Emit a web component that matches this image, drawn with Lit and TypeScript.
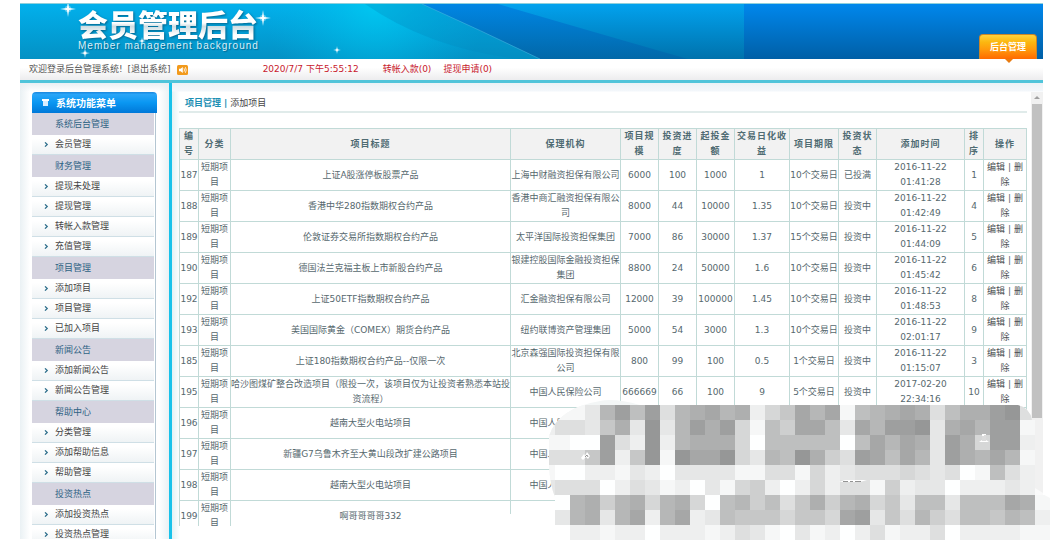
import { LitElement, html, css, svg } from "lit";
import { customElement } from "lit/decorators.js";

type MenuEntry = { label: string; heading?: boolean };

const MENU: MenuEntry[] = [
  { label: "系统后台管理", heading: true },
  { label: "会员管理" },
  { label: "财务管理", heading: true },
  { label: "提现未处理" },
  { label: "提现管理" },
  { label: "转帐入款管理" },
  { label: "充值管理" },
  { label: "项目管理", heading: true },
  { label: "添加项目" },
  { label: "项目管理" },
  { label: "已加入项目" },
  { label: "新闻公告", heading: true },
  { label: "添加新闻公告" },
  { label: "新闻公告管理" },
  { label: "帮助中心", heading: true },
  { label: "分类管理" },
  { label: "添加帮助信息" },
  { label: "帮助管理" },
  { label: "投资热点", heading: true },
  { label: "添加投资热点" },
  { label: "投资热点管理" },
];

const HEADS = ["编号", "分类", "项目标题", "保理机构", "项目规模", "投资进度", "起投金额", "交易日化收益", "项目期限", "投资状态", "添加时间", "排序", "操作"];

const ROWS: string[][] = [
  ["187", "上证A股涨停板股票产品", "上海中财融资担保有限公司", "6000", "100", "1000", "1", "10个交易日", "已投满", "2016-11-22 01:41:28", "1"],
  ["188", "香港中华280指数期权合约产品", "香港中商汇融资担保有限公司", "8000", "44", "10000", "1.35", "10个交易日", "投资中", "2016-11-22 01:42:49", "4"],
  ["189", "伦敦证券交易所指数期权合约产品", "太平洋国际投资担保集团", "7000", "86", "30000", "1.37", "15个交易日", "投资中", "2016-11-22 01:44:09", "5"],
  ["190", "德国法兰克福主板上市新股合约产品", "银建控股国际金融投资担保集团", "8800", "24", "50000", "1.6", "10个交易日", "投资中", "2016-11-22 01:45:42", "6"],
  ["192", "上证50ETF指数期权合约产品", "汇金融资担保有限公司", "12000", "39", "100000", "1.45", "10个交易日", "投资中", "2016-11-22 01:48:53", "8"],
  ["193", "美国国际黄金（COMEX）期货合约产品", "纽约联博资产管理集团", "5000", "54", "3000", "1.3", "10个交易日", "投资中", "2016-11-22 02:01:17", "9"],
  ["185", "上证180指数期权合约产品--仅限一次", "北京森强国际投资担保有限公司", "800", "99", "100", "0.5", "1个交易日", "投资中", "2016-11-22 01:15:07", "3"],
  ["195", "哈沙图煤矿整合改造项目（限投一次，该项目仅为让投资者熟悉本站投资流程）", "中国人民保险公司", "666669", "66", "100", "9", "5个交易日", "投资中", "2017-02-20 22:34:16", "10"],
  ["196", "越南大型火电站项目", "中国人民保险公司", "", "", "", "", "", "", "", ""],
  ["197", "新疆G7乌鲁木齐至大黄山段改扩建公路项目", "中国人民保险公司", "", "", "", "", "", "", "", ""],
  ["198", "越南大型火电站项目", "中国人民保险公司", "", "", "", "", "", "", "", ""],
  ["199", "啊哥哥哥哥332", "", "", "", "", "", "", "", "", ""],
];

/* One hex digit per 15px tile, 0 is white and F the darkest grey; a dot leaves the tile out. */
const TILES = [
  "11139C8C49AB9A257B9B189ABA48AACD4.",
  "24437A3D39CAC5186BB83B9CCD3AB9CC1.",
  "1100C42D29AAA508888808B9BA3CA5CC2.",
  "4447C27D1DBBD5398DA64CB8B93CA9B91.",
  "100221320333311441523444543401842.",
  "344402431203156202524416233022232.",
  ".09A69A59A50896847A69A573883888BA1",
  ".39A39B29B2387775775BC374964887982",
  "..22122022212431031202412240222211",
];

const grey = (digit: string) => {
  const n = 255 - parseInt(digit, 16) * 8;
  return `rgb(${n - 1},${n},${n})`;
};

const star = (x: number, y: number, r: number) => svg`
  <circle cx=${x} cy=${y} r=${r / 2.4} fill="#fff" opacity="0.35"></circle>
  <path fill="#fff" d="M${x} ${y - r}L${x + r / 8} ${y - r / 8}L${x + r} ${y}L${x + r / 8} ${y + r / 8}L${x} ${y + r}L${x - r / 8} ${y + r / 8}L${x - r} ${y}L${x - r / 8} ${y - r / 8}Z"></path>
  <circle cx=${x} cy=${y} r=${r / 5} fill="#fff"></circle>`;

@customElement("app-header")
class AppHeader extends LitElement {
  static styles = css`
    :host { display: block; position: relative; height: 56px; background: linear-gradient(#0087ec, #005fa6); border-top: 1px solid #8fd0dc; box-sizing: border-box; }
    .art { position: absolute; left: 0; top: 0; display: block; }
    .bar { position: relative; display: flex; justify-content: space-between; align-items: flex-start; height: 55px; padding: 0 6px 0 58px; }
    .logo { display: flex; flex-direction: column; padding-top: 2px; }
    .name { margin: 0; font: 900 30px/34px "Noto Sans CJK SC", sans-serif; background: linear-gradient(#fff 50%, #cfdde2 60%, #fff 85%); -webkit-background-clip: text; background-clip: text; color: transparent; filter: drop-shadow(1px 1px 1px #04648c); }
    .sub { margin: 0; font: 10px/12px "Liberation Sans", Arial, sans-serif; letter-spacing: 1px; color: #d8f0fa; text-shadow: 1px 1px 1px #04648c; }
    .tab { align-self: flex-end; position: relative; width: 58px; height: 25px; padding: 0; border: 1px solid #c8862a; border-bottom: 0; border-radius: 4px 4px 0 0; background: linear-gradient(#ffd23c, #fbb710 30%, #ff9a0c 60%, #ff6a00); color: #fff; font: bold 9px/24px "Noto Sans CJK SC", sans-serif; }
    .tab::after { content: ""; position: absolute; left: 25px; top: 24px; border: 4px solid transparent; border-top: 4px solid #e87b10; border-bottom: 0; }
  `;
  render() {
    return html`
      <svg class="art" width="724" height="55" viewBox="0 0 724 55" aria-hidden="true">
        <defs>
          <linearGradient id="a" x1="0" y1="0" x2="0" y2="1"><stop offset="0" stop-color="#02b0ec"></stop><stop offset="1" stop-color="#0391c4"></stop></linearGradient>
          <linearGradient id="b" x1="0" y1="0" x2="0" y2="1"><stop offset="0" stop-color="#0086e4"></stop><stop offset="1" stop-color="#0268a8"></stop></linearGradient>
          <linearGradient id="c" x1="0" y1="0" x2="0" y2="1"><stop offset="0" stop-color="#02a2ee"></stop><stop offset="1" stop-color="#0072ac"></stop></linearGradient>
          <radialGradient id="d" gradientUnits="userSpaceOnUse" cx="355" cy="0" r="110"><stop offset="0" stop-color="#00ccf2" stop-opacity="0.8"></stop><stop offset="1" stop-color="#00b4e4" stop-opacity="0"></stop></radialGradient>
        </defs>
        <rect width="724" height="55" fill="url(#a)"></rect>
        <rect width="724" height="55" fill="url(#d)"></rect>
        <path d="M345 0Q410 45 500 55H524Q465 26 404 0Z" fill="#0488bc" opacity="0.3"></path>
        <path d="M402 0Q460 26 520 55H724V0Z" fill="url(#b)"></path>
        <path d="M478 0Q560 24 668 55H724V0Z" fill="url(#c)"></path>
        <path d="M402 0Q460 26 520 55" fill="none" stroke="#48b8e0" stroke-width="0.8" opacity="0.7"></path>
      </svg>
      <div class="bar">
        <div class="logo">
          <h1 class="name">会员管理后台</h1>
          <p class="sub">Member management background</p>
        </div>
        <button class="tab" type="button">后台管理</button>
      </div>
      <svg class="art" width="340" height="55" viewBox="0 0 340 55" aria-hidden="true">
        ${star(48, 5, 8)}${star(243, 14, 8)}${star(317, 46, 4)}${star(65, 49, 5)}${star(122, 37, 4)}
      </svg>`;
  }
}

@customElement("app-menu")
class AppMenu extends LitElement {
  static styles = css`
    :host { display: block; }
    .title { display: flex; align-items: center; gap: 7px; height: 21px; margin: 0; padding-left: 10px; border-radius: 4px 4px 0 0; background: linear-gradient(#1b86dc, #2aa6f8 12%, #0a97f2 50%, #0078d8); color: #fff; font: bold 10px/20px "Noto Sans CJK SC", sans-serif; }
    .list { list-style: none; margin: 0; padding: 0; margin-right: 1px; border-right: 1px solid #b4c6d2; }
    .item { box-sizing: border-box; height: 20px; margin-right: 1px; border-bottom: 1px solid #cfdfe6; background: linear-gradient(#fff 20%, #eff3f5); }
    .head { box-sizing: border-box; height: 22px; margin-right: 1px; padding-left: 23px; background: #d6d4e0; color: #2f6384; line-height: 22px; }
    .link { display: flex; align-items: center; gap: 6px; padding-left: 10px; line-height: 19px; color: #444; text-decoration: none; }
  `;
  render() {
    return html`
      <h2 class="title">
        <svg width="7" height="7" viewBox="0 0 7 7" aria-hidden="true"><path d="M0 0H7V2H0Z" fill="#fff"></path><path d="M1 2H6V7H1Z" fill="#d8eeff"></path></svg>
        系统功能菜单
      </h2>
      <ul class="list">
        ${MENU.map((m) =>
          m.heading
            ? html`<li class="head">${m.label}</li>`
            : html`<li class="item"><a class="link" href="#"><svg width="7" height="5" viewBox="0 0 7 5" aria-hidden="true"><path d="M3 0.4L5.2 2.5L3 4.6" fill="none" stroke="#2f6f8c" stroke-width="1.3"></path></svg>${m.label}</a></li>`
        )}
      </ul>`;
  }
}

@customElement("project-table")
class ProjectTable extends LitElement {
  static styles = css`
    :host { display: block; }
    .grid { width: 100%; table-layout: fixed; border-collapse: collapse; color: #56686e; text-align: center; line-height: 15px; }
    .w1 { width: 19px; } .w2 { width: 32px; } .w4 { width: 110px; } .w5 { width: 38px; } .w6 { width: 55px; } .w7 { width: 49px; } .w8 { width: 88px; } .w9 { width: 43px; }
    .th { height: 30px; padding: 0; border: 1px solid #c1dad7; background: #f2f2f2; color: #4f6b72; font-weight: bold; letter-spacing: 1px; }
    .td { height: 30px; padding: 0; border: 1px solid #c1dad7; background: #fff; }
    .op { color: #4a4f52; text-decoration: none; }
  `;
  render() {
    return html`
      <table class="grid">
        <colgroup>
          <col class="w1"><col class="w2"><col><col class="w4"><col class="w5"><col class="w5"><col class="w5"><col class="w6"><col class="w7"><col class="w5"><col class="w8"><col class="w1"><col class="w9">
        </colgroup>
        <thead><tr>${HEADS.map((h) => html`<th class="th" scope="col">${h}</th>`)}</tr></thead>
        <tbody>
          ${ROWS.map(([id, ...rest]) => html`<tr>
            <td class="td">${id}</td><td class="td">短期项目</td>
            ${rest.map((v) => html`<td class="td">${v}</td>`)}
            <td class="td">${rest[2] ? html`<a class="op" href="#">编辑</a> | <a class="op" href="#">删除</a>` : ""}</td>
          </tr>`)}
        </tbody>
      </table>`;
  }
}

@customElement("app-root")
class AppRoot extends LitElement {
  static styles = css`
    :host { display: block; position: relative; box-sizing: border-box; height: 100vh; padding: 3px 7px 16px 20px; overflow: hidden; background: #fff; color: #555; font: 9px/15px "DejaVu Sans", "Noto Sans CJK SC", sans-serif; }
    .page { display: flex; flex-direction: column; height: 100%; }
    .info { display: flex; align-items: center; height: 21px; flex: none; padding-left: 9px; border-bottom: 3px solid #4fc4da; background: linear-gradient(#fff 40%, #ececee); }
    .quit { margin-left: 5px; color: #555; text-decoration: none; }
    .sound { margin-left: 6px; }
    .red { color: #c8202c; text-decoration: none; margin-left: 12px; }
    .clock { margin-left: 75px; margin-right: 12px; }
    .body { display: flex; flex: 1; min-height: 0; }
    .side { flex: none; box-sizing: border-box; width: 149px; padding: 9px 12px 0; overflow: hidden; background: linear-gradient(#e8eff3, transparent 9px), linear-gradient(90deg, #eaf1f4, #fff 10px, #fff 139px, #eaf1f4); }
    .main { flex: 1; min-width: 0; display: flex; border-left: 3px solid #18c2ea; background: linear-gradient(#eaf2f6, #f3f7fb 8px, transparent 9px), linear-gradient(90deg, #e2f2f4, #fff 8px); }
    .content { flex: 1; min-width: 0; display: flex; flex-direction: column; padding: 13px 4px 13px 7px; }
    .tabs { display: flex; gap: 3px; flex: none; margin-bottom: 15px; padding: 0 0 0 6px; border-bottom: 2px solid #e0ebea; }
    .tab { color: #444; text-decoration: none; }
    .on { color: #1c8fb4; font-weight: bold; }
    .clip { flex: 1; min-height: 0; overflow: hidden; }
    .scroll { flex: none; width: 12px; margin-top: 9px; background: #f1f1f1; display: flex; flex-direction: column; align-items: center; }
    .arrow { display: block; margin: 4px 0 5px; }
    .thumb { width: 10px; height: 314px; background: #c1c1c1; }
    .tiles { position: absolute; right: 0; bottom: 15px; }
  `;
  render() {
    return html`
      <div class="page">
        <app-header></app-header>
        <div class="info">
          <span>欢迎登录后台管理系统!</span>
          <a class="quit" href="#">[退出系统]</a>
          <svg class="sound" width="11" height="10" viewBox="0 0 11 10" aria-hidden="true"><rect width="11" height="10" rx="1.5" fill="#f29a1c"></rect><path d="M2 3.8H3.6L5.8 2V8L3.6 6.2H2Z" fill="#fff"></path><path d="M7 3.3Q8 5 7 6.7M8.4 2.2Q10 5 8.4 7.8" fill="none" stroke="#fff" stroke-width="0.8"></path></svg>
          <span class="red clock">2020/7/7 下午5:55:12</span>
          <a class="red" href="#">转帐入款(0)</a>
          <a class="red" href="#">提现申请(0)</a>
        </div>
        <div class="body">
          <nav class="side"><app-menu></app-menu></nav>
          <main class="main">
            <div class="content">
              <div class="tabs"><a class="tab on" href="#">项目管理</a><span class="on">|</span><a class="tab" href="#">添加项目</a></div>
              <div class="clip"><project-table></project-table></div>
            </div>
            <div class="scroll" aria-hidden="true">
              <svg class="arrow" width="6" height="3" viewBox="0 0 6 3"><path d="M0 3L3 0L6 3Z" fill="#a0a0a0"></path></svg>
              <div class="thumb"></div>
            </div>
          </main>
        </div>
      </div>
      <svg class="tiles" width="550" height="140" viewBox="500 400 550 140" aria-hidden="true">
        <defs>
          <clipPath id="edge"><path d="M600 401Q615 398 640 405H1018Q1030 408 1032 420H1035V490L1050 498V540H570V525H555V497Q550 485 549 465V436Q558 408 600 401Z"></path></clipPath>
        </defs>
        <path d="M506 515L520 512H560V540H506Z" fill="#fff"></path>
        <path d="M1035 488L1043 493V540H1035Z" fill="#fafafa"></path>
        <g clip-path="url(#edge)" shape-rendering="crispEdges">
          <rect x="549" y="400" width="486" height="125" fill="#f3f6f6"></rect>
          ${TILES.map((row, r) =>
            [...row].map((d, c) => (d === "." ? "" : svg`<rect x=${540 + c * 15} y=${405 + r * 15} width="15" height="15" fill=${grey(d)}></rect>`))
          )}
        </g>
        <path d="M581 458L584 454L585 456L587 452L590 456L588 459L586 457L583 460Z" fill="#fff"></path>
        <path d="M585 457L587 455L588 457" fill="none" stroke="#777" stroke-width="0.8"></path>
        <path d="M979 442L982 440V434H986V440L989 442Z" fill="#fff"></path>
        <path d="M983 436V441M985 435V441" stroke="#999" stroke-width="0.7"></path>
        <path d="M839 482L845 480H867L860 482Z" fill="#fff"></path>
        <path d="M843 481.5H848M850 481.5H853M855 481.5H861" stroke="#777" stroke-width="0.8"></path>
      </svg>`;
  }
}
